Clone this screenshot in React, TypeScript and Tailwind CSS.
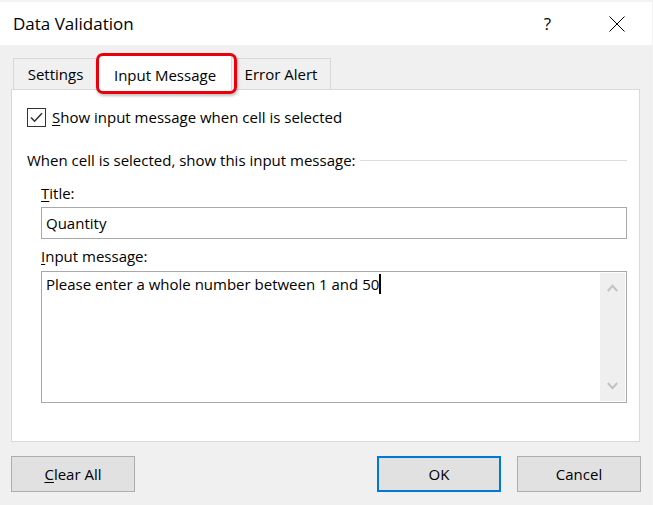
import React from 'react';

function Chevron({ up }: { up?: boolean }) {
  return (
    <svg width="11" height="8" viewBox="0 0 11 8" className="block">
      <path
        d={up ? 'M0.8 7 L5.5 1.8 L10.2 7' : 'M0.8 1 L5.5 6.2 L10.2 1'}
        fill="none"
        stroke="#c2c2c2"
        strokeWidth="2"
      />
    </svg>
  );
}

export default function App() {
  return (
    <div
      className="w-[653px] h-[505px] bg-[#f3f3f3] pt-[2px] overflow-hidden text-[#000]"
      style={{ fontFamily: '"Segoe UI", "Open Sans", sans-serif' }}
    >
      <div className="w-[652px] h-[503px] bg-[#f0f0f0] flex flex-col">
        {/* Title bar */}
        <div className="h-[43px] bg-white flex items-center pl-[13px] shrink-0">
          <span className="text-[17px] leading-none">Data Validation</span>
          <span className="ml-auto text-[17px] leading-none">?</span>
          <svg width="16" height="16" viewBox="0 0 16 16" className="ml-[58px] mr-[27px]">
            <path d="M0.5 0.5 L15.5 15.5 M15.5 0.5 L0.5 15.5" stroke="#000" strokeWidth="1" />
          </svg>
        </div>

        {/* Tabs */}
        <div className="h-[44px] flex items-end pl-[13px] text-[15px] shrink-0">
          <div className="w-[85px] h-[31px] pt-[1px] border border-b-0 border-[#d9d9d9] flex items-center justify-center">
            Settings
          </div>
          <div className="relative z-10 -mb-px w-[134px] h-[36px] pt-[5px] bg-white border border-b-0 border-[#d9d9d9]">
            <div className="h-[31px] flex items-center justify-center">Input Message</div>
            <div className="absolute -left-[3px] -top-[2px] -right-[6px] -bottom-[4px] border-[3px] border-[#e8000b] rounded-[7px] shadow-[1px_2px_3px_rgba(0,0,0,0.25)]" />
          </div>
          <div className="w-[99px] h-[31px] pt-[1px] border border-b-0 border-l-0 border-[#d9d9d9] flex items-center justify-center">
            Error Alert
          </div>
        </div>

        {/* Panel */}
        <div className="ml-[11px] w-[629px] h-[353px] border border-[#d9d9d9] bg-white pt-[17px] pl-[15px] pr-[12px] text-[15px] shrink-0">
          <div className="flex items-center h-[20px]">
            <div className="w-[19px] h-[19px] border-[1.5px] border-[#333] flex items-center justify-center">
              <svg width="13" height="11" viewBox="0 0 13 11">
                <path d="M1 5.5 L4.6 9.2 L12 1.3" fill="none" stroke="#333" strokeWidth="1.6" />
              </svg>
            </div>
            <span className="ml-[6px] leading-[20px]">
              <span className="underline underline-offset-2">S</span>how input message when cell is selected
            </span>
          </div>

          <div className="mt-[23px] flex items-center h-[20px]">
            <span className="leading-[20px] whitespace-nowrap">When cell is selected, show this input message:</span>
            <div className="flex-1 ml-[4px] h-px bg-[#dcdcdc]" />
          </div>

          <div className="ml-[14px]">
            <div className="mt-[13px] leading-[20px]">
              <span className="underline underline-offset-2">T</span>itle:
            </div>
            <div className="mt-[4px] h-[32px] border border-[#a9a9a9] flex items-center pl-[4px]">Quantity</div>
            <div className="mt-[7px] leading-[20px]">
              <span className="underline underline-offset-2">I</span>nput message:
            </div>
            <div className="mt-[5px] h-[132px] border border-[#a9a9a9] flex">
              <div className="flex-1 pl-[4px] pt-[2px] leading-[20px] flex items-start">
                <span>Please enter a whole number between 1 and 50</span>
                <span className="inline-block w-[2px] h-[20px] bg-black" />
              </div>
              <div className="w-[25px] my-[1px] mr-[1px] bg-[#efefef] flex flex-col items-center justify-between py-[11px]">
                <Chevron up />
                <Chevron />
              </div>
            </div>
          </div>
        </div>

        {/* Buttons */}
        <div className="mt-[14px] flex text-[15px]">
          <button className="ml-[11px] w-[124px] h-[36px] bg-[#e1e1e1] border border-[#adadad]">
            <span className="underline underline-offset-2">C</span>lear All
          </button>
          <button className="ml-auto w-[124px] h-[36px] bg-[#e1e1e1] border-2 border-[#0078d7]">OK</button>
          <button className="ml-[16px] mr-[11px] w-[124px] h-[36px] bg-[#e1e1e1] border border-[#adadad]">
            Cancel
          </button>
        </div>
      </div>
    </div>
  );
}
